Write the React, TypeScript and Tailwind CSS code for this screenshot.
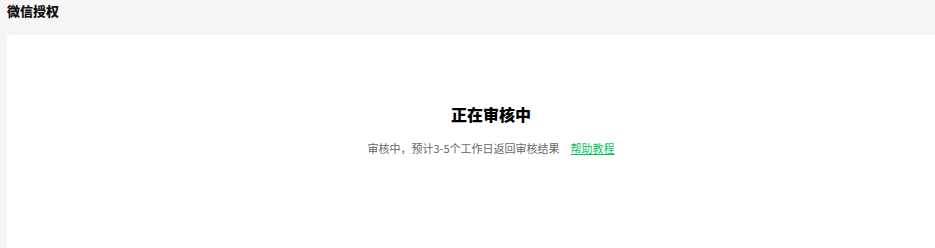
export default function App() {
  return (
    <div
      className="flex h-[248px] w-[935px] flex-col overflow-hidden bg-[#f5f5f5]"
      style={{ fontFamily: '"Noto Sans CJK SC", "Noto Sans", sans-serif' }}
    >
      <div className="flex h-[35px] shrink-0 items-start px-[7px] pt-[2px]">
        <h1 className="text-[13px] font-black leading-[18px] text-[#111]">微信授权</h1>
      </div>
      <div className="ml-[7px] w-[968px] flex-1 shrink-0 rounded-tl-[3px] bg-white">
        <div className="flex flex-col items-center pt-[67px]">
          <h2 className="text-[16px] font-black leading-[24px] text-[#000]">正在审核中</h2>
          <p className="mt-[14px] flex items-center text-[11px] leading-[16px] text-[#666]">
            <span>审核中，预计3-5个工作日返回审核结果</span>
            <a href="#" className="ml-[11px] text-[#07c160] underline">
              帮助教程
            </a>
          </p>
        </div>
      </div>
    </div>
  );
}
